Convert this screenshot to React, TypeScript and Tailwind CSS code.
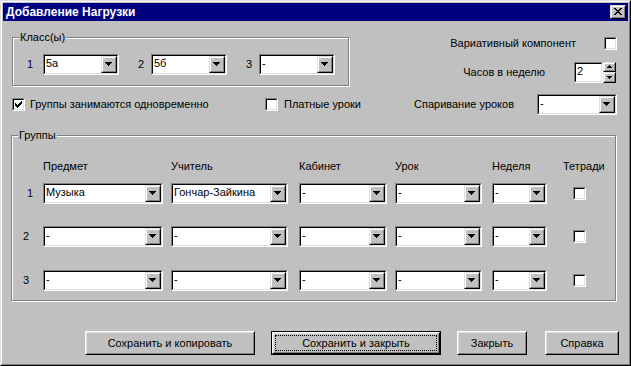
import React from 'react';

function Arrow() {
  return (
    <svg width="8" height="5" viewBox="0 0 8 5" shapeRendering="crispEdges" className="block">
      <path d="M0 0h7v1H0zM1 1h5v1H1zM2 2h3v1H2zM3 3h1v1H3z" fill="#000" />
    </svg>
  );
}

function SmallArrow({ up }: { up?: boolean }) {
  return (
    <svg width="5" height="3" viewBox="0 0 5 3" shapeRendering="crispEdges" className="block">
      {up ? (
        <path d="M2 0h1v1H2zM1 1h3v1H1zM0 2h5v1H0z" fill="#000" />
      ) : (
        <path d="M0 0h5v1H0zM1 1h3v1H1zM2 2h1v1H2z" fill="#000" />
      )}
    </svg>
  );
}

function Raised({
  className = '',
  inner = 'items-center justify-center',
  children,
}: {
  className?: string;
  inner?: string;
  children?: React.ReactNode;
}) {
  return (
    <div className={`${className} shrink-0 border border-t-[#dfdfdf] border-l-[#dfdfdf] border-r-black border-b-black bg-[#c0c0c0]`}>
      <div className={`w-full h-full flex border border-t-white border-l-white border-r-[#808080] border-b-[#808080] ${inner}`}>
        {children}
      </div>
    </div>
  );
}

function Sunken({ className = '', children }: { className?: string; children?: React.ReactNode }) {
  return (
    <div className={`${className} shrink-0 border border-t-[#808080] border-l-[#808080] border-b-white border-r-white`}>
      <div className="w-full h-full flex border border-t-black border-l-black border-b-[#dfdfdf] border-r-[#dfdfdf] bg-white">
        {children}
      </div>
    </div>
  );
}

function Combo({ w, value = '-' }: { w: string; value?: string }) {
  return (
    <Sunken className={`${w} h-[21px]`}>
      <div className="flex-1 pl-[1px] leading-[15px] whitespace-nowrap overflow-hidden">{value}</div>
      <Raised className="w-[16px] h-[17px]">
        <Arrow />
      </Raised>
    </Sunken>
  );
}

function Check({ checked }: { checked?: boolean }) {
  return (
    <Sunken className="w-[13px] h-[13px]">
      <div className="flex-1 flex items-start justify-start pl-[1px] pt-[1px]">
        {checked && (
          <svg width="7" height="7" viewBox="0 0 7 7" shapeRendering="crispEdges" className="block">
            <path
              d="M6 0h1v1H6zM5 1h2v1H5zM0 2h1v1H0zM4 2h3v1H4zM0 3h2v1H0zM3 3h3v1H3zM0 4h5v1H0zM1 5h3v1H1zM2 6h1v1H2z"
              fill="#000"
            />
          </svg>
        )}
      </div>
    </Sunken>
  );
}

function GroupBox({
  label,
  className = '',
  children,
}: {
  label: string;
  className?: string;
  children?: React.ReactNode;
}) {
  return (
    <div className={`relative shrink-0 border border-[#808080] shadow-[inset_1px_1px_0_#fff,1px_1px_0_#fff] ${className}`}>
      <span className="absolute left-[6px] top-[-7px] bg-[#c0c0c0] px-[1px] leading-[13px]">{label}</span>
      {children}
    </div>
  );
}

function Button({
  w,
  def,
  className = '',
  children,
}: {
  w: string;
  def?: boolean;
  className?: string;
  children?: React.ReactNode;
}) {
  const body = (
    <div className="flex-1 flex border border-t-white border-l-white border-r-black border-b-black">
      <div className="flex-1 flex border border-t-[#dfdfdf] border-l-[#dfdfdf] border-r-[#808080] border-b-[#808080]">
        {def ? (
          <div className="flex-1 m-[1px] border border-dotted border-black flex items-center justify-center">
            {children}
          </div>
        ) : (
          <div className="flex-1 flex items-center justify-center">{children}</div>
        )}
      </div>
    </div>
  );
  return def ? (
    <div className={`${w} ${className} flex border border-black`}>{body}</div>
  ) : (
    <div className={`${w} ${className} flex`}>{body}</div>
  );
}

const rows = [
  { n: '1', pad: 'pl-[15px]', subj: 'Музыка', teacher: 'Гончар-Зайкина', mt: 'mt-[10px]' },
  { n: '2', pad: 'pl-[11px]', subj: '-', teacher: '-', mt: 'mt-[22px]' },
  { n: '3', pad: 'pl-[11px]', subj: '-', teacher: '-', mt: 'mt-[23px]' },
];

export default function App() {
  return (
    <div className="w-[631px] h-[366px] bg-[#c0c0c0] font-['Liberation_Sans',Arial,sans-serif] text-[11px] leading-[13px] text-black border border-t-[#dfdfdf] border-l-[#dfdfdf] border-r-black border-b-black">
      <div className="h-full flex flex-col p-[1px] border border-t-white border-l-white border-r-[#808080] border-b-[#808080]">
        {/* title bar */}
        <div className="h-[18px] shrink-0 bg-[#000080] flex items-center pl-[3px] pr-[2px]">
          <span className="flex-1 text-white font-bold text-[12px] leading-[14px]">Добавление Нагрузки</span>
          <Raised className="w-[16px] h-[14px]" inner="items-start justify-start pl-[2px] pt-[1px]">
            <svg width="8" height="7" viewBox="0 0 8 7" shapeRendering="crispEdges" className="block">
              <path
                d="M0 0h2v1H0zM6 0h2v1H6zM1 1h2v1H1zM5 1h2v1H5zM2 2h4v1H2zM3 3h2v1H3zM2 4h4v1H2zM1 5h2v1H1zM5 5h2v1H5zM0 6h2v1H0zM6 6h2v1H6z"
                fill="#000"
              />
            </svg>
          </Raised>
        </div>

        {/* client area */}
        <div className="flex-1 flex flex-col">
          <div className="flex items-start mt-[16px] h-[49px]">
            <GroupBox label="Класс(ы)" className="ml-[9px] w-[337px] h-[49px] pt-[16px] pl-[14px]">
              <div className="flex items-center h-[21px]">
                <span className="w-[16px]">1</span>
                <Combo w="w-[76px]" value="5а" />
                <span className="ml-[19px] w-[13px]">2</span>
                <Combo w="w-[76px]" value="5б" />
                <span className="ml-[19px] w-[13px]">3</span>
                <Combo w="w-[76px]" />
              </div>
            </GroupBox>
            <div className="flex-1 flex flex-col items-end pr-[11px]">
              <div className="flex items-center h-[13px]">
                <span>Вариативный компонент</span>
                <div className="ml-[28px]">
                  <Check />
                </div>
              </div>
              <div className="flex items-center mt-[12px] h-[21px] mr-[1px]">
                <span>Часов в неделю</span>
                <div className="ml-[29px] flex">
                  <Sunken className="w-[29px] h-[21px]">
                    <div className="flex-1 pl-[1px] leading-[15px]">2</div>
                  </Sunken>
                  <div className="flex flex-col w-[13px] h-[21px]">
                    <Raised className="w-[13px] h-[10px]" inner="items-start justify-center pt-[1px]">
                      <SmallArrow up />
                    </Raised>
                    <Raised className="w-[13px] h-[11px]" inner="items-start justify-center pt-[2px]">
                      <SmallArrow />
                    </Raised>
                  </div>
                </div>
              </div>
            </div>
          </div>

          <div className="flex items-center h-[21px] mt-[8px] ml-[9px]">
            <div className="w-[253px] flex items-center">
              <Check checked />
              <span className="ml-[5px]">Группы занимаются одновременно</span>
            </div>
            <div className="w-[149px] flex items-center">
              <Check />
              <span className="ml-[6px]">Платные уроки</span>
            </div>
            <span className="w-[123px]">Спаривание уроков</span>
            <Combo w="w-[80px]" />
          </div>

          <GroupBox label="Группы" className="ml-[8px] mt-[20px] w-[605px] h-[166px] pt-[24px]">
            <div className="grid grid-cols-[31px_128px_128px_96px_97px_71px_1fr] h-[13px]">
              <span />
              <span>Предмет</span>
              <span>Учитель</span>
              <span>Кабинет</span>
              <span>Урок</span>
              <span>Неделя</span>
              <span>Тетради</span>
            </div>
            {rows.map((r) => (
              <div
                key={r.n}
                className={`grid grid-cols-[31px_128px_128px_96px_97px_71px_1fr] items-center h-[21px] ${r.mt}`}
              >
                <span className={r.pad}>{r.n}</span>
                <Combo w="w-[120px]" value={r.subj} />
                <Combo w="w-[117px]" value={r.teacher} />
                <Combo w="w-[88px]" />
                <Combo w="w-[87px]" />
                <Combo w="w-[55px]" />
                <div className="pl-[10px] flex">
                  <Check />
                </div>
              </div>
            ))}
          </GroupBox>

          <div className="flex mt-[30px] ml-[82px] h-[24px]">
            <Button w="w-[170px]">Сохранить и копировать</Button>
            <Button w="w-[170px]" def className="ml-[16px]">
              Сохранить и закрыть
            </Button>
            <Button w="w-[70px]" className="ml-[16px]">
              Закрыть
            </Button>
            <Button w="w-[74px]" className="ml-[18px]">
              Справка
            </Button>
          </div>
        </div>
      </div>
    </div>
  );
}
